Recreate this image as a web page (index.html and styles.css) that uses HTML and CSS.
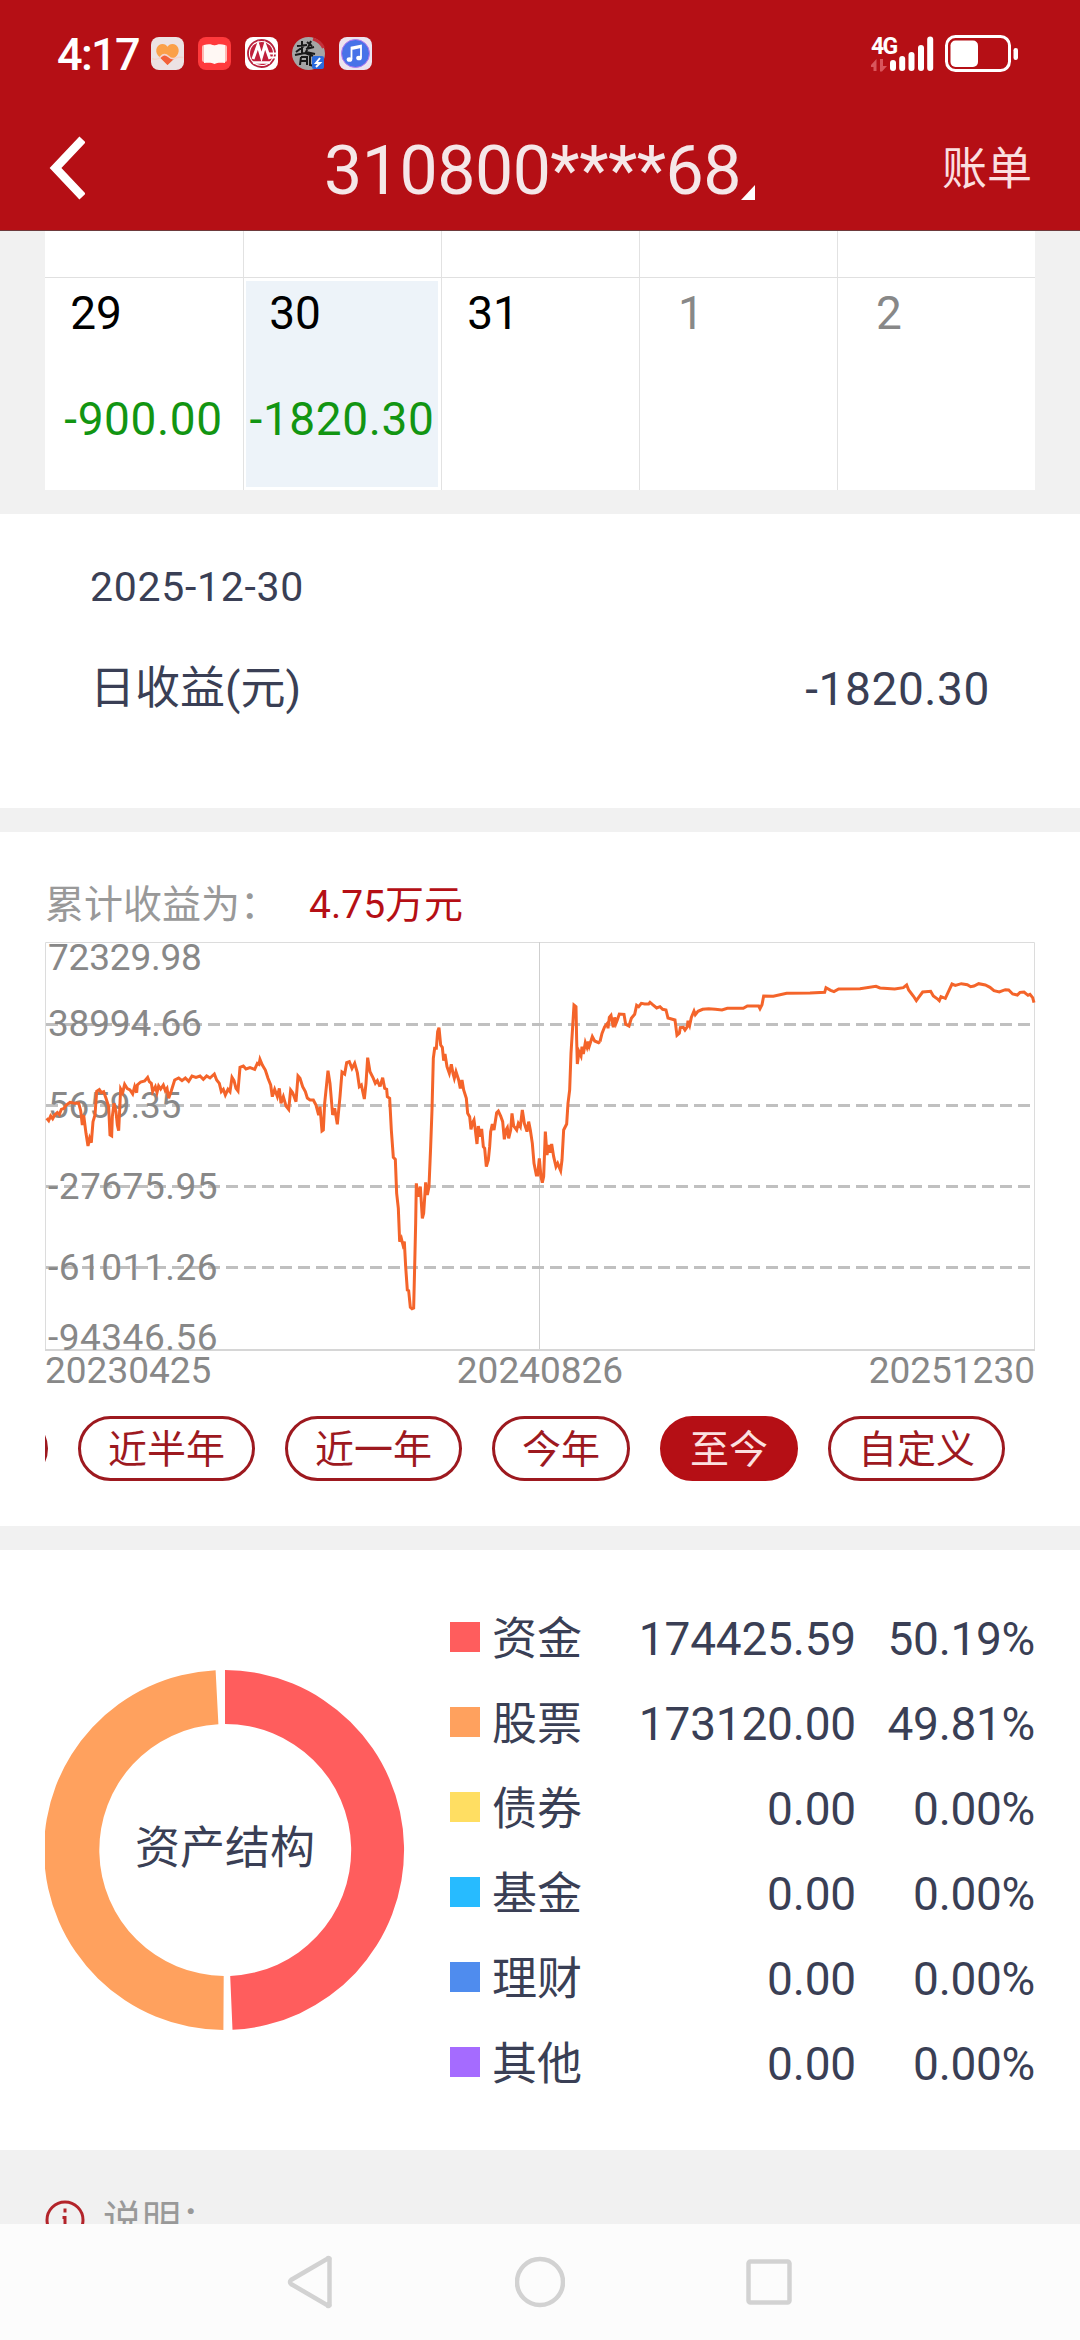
FILE: index.html
```html
<!DOCTYPE html>
<html lang="zh-CN">
<head>
  <meta charset="UTF-8">
  <title>收益日历</title>
  <link rel="stylesheet" href="styles.css">
</head>
<body>
  <header>
    <div class="status-bar">
      <span class="clock">4:17</span>
      <div class="notices">
        <svg viewBox="0 0 33 33">
          <rect width="33" height="33" rx="8" fill="#ece2e3"/>
          <path d="M16.500 28L7 18.500C3 13 6.500 7 11.500 7c2.500 0 4 1.200 5 2.800C17.500 8.200 19 7 21.500 7c5 0 8.500 6 4.500 11.500z" fill="#fba048"/>
          <path d="M9.500 21c3-4.500 6-4 8-1.500s4 3 7 1L16.500 28z" fill="#f2603a"/>
          <path d="M1 21.500c5 2 7 .5 9-2s5-2.500 7.500 0 5 2.500 7 1.500 4-1 8-.5" fill="none" stroke="#f3d3cd" stroke-width="1.600"/>
        </svg>
        <svg viewBox="0 0 33 33">
          <rect width="33" height="33" rx="8" fill="#ff3a3c"/>
          <rect x="4" y="8" width="25" height="17" rx="2" fill="#ffb9b4"/>
          <path d="M6 8c4-1 8-1 10.500 1C19 7 23 7 27 8v18c-4-.5-8-.5-10.500 1C14 25.500 10 25.500 6 26z" fill="#fff8f4"/>
        </svg>
        <svg viewBox="0 0 33 33">
          <rect width="33" height="33" rx="8" fill="#fff"/>
          <circle cx="16.500" cy="16.500" r="13.500" fill="none" stroke="#b8203c" stroke-width="1.800"/>
          <circle cx="16.500" cy="16.500" r="11.500" fill="#c0203c"/>
          <path d="M8 22L13 8l3.500 12L20 8l5 14" fill="none" stroke="#fff" stroke-width="3"/>
          <path d="M8 25.500h17" stroke="#fff" stroke-width="2.500"/>
          <path d="M24 16.500h9M25.500 20.500h7" stroke="#fff" stroke-width="2"/>
        </svg>
        <svg viewBox="0 0 33 33">
          <circle cx="16.500" cy="16.500" r="16.500" fill="#a5a5a5"/>
          <path d="M5 9l10-1M10 4v13M4 15l8-6M15 5l5 4M14 12l8-2M19 4l-5 11 9 2M3 18l10-2 8 3M9 20l-1 8M9 20h6v8M9 24h6M18 19v9l4 1" fill="none" stroke="#181818" stroke-width="2"/>
          <path d="M21 2c5 1.500 8.500 4.500 10.500 9" fill="none" stroke="#c3303a" stroke-width="3"/>
          <rect x="20" y="19" width="12" height="13" rx="2" fill="#2b6bdd"/>
          <path d="M28 21l-4 5h4l-4 4" fill="none" stroke="#fff" stroke-width="2"/>
        </svg>
        <svg viewBox="0 0 33 33">
          <rect width="33" height="33" rx="8" fill="#ece3ef"/>
          <circle cx="16.500" cy="16.500" r="14" fill="#4772e8"/>
          <circle cx="16.500" cy="16.500" r="14" fill="none" stroke="#b678ef" stroke-width="1"/>
          <path d="M12.500 22V10.500L22 8.500V20.500M12.500 12L22 10" fill="none" stroke="#fff" stroke-width="1.800"/>
          <ellipse cx="10.500" cy="22.500" rx="2.800" ry="2.300" fill="#fff"/>
          <ellipse cx="20" cy="21" rx="2.800" ry="2.300" fill="#fff"/>
        </svg>
      </div>
      <svg class="signal" viewBox="0 0 148 38">
        <text x="0" y="19">4G</text>
        <path d="M0 30h5.500v6h-3v-4H0zM0 30l5.500-6v7zM9 24h3v7h4l-5 5.500H9z" class="data"/>
        <g fill="#fff">
          <rect x="19" y="25" width="6" height="11" rx="3"/>
          <rect x="28.200" y="21" width="6" height="15" rx="3"/>
          <rect x="37.500" y="17" width="6" height="19" rx="3"/>
          <rect x="47" y="10" width="6" height="26" rx="3"/>
          <rect x="56.200" y="1.500" width="6" height="34.500" rx="3"/>
          <rect x="79.500" y="5.500" width="27.500" height="26.500" rx="5"/>
          <rect x="142.500" y="13" width="4.500" height="12" rx="2.200"/>
        </g>
        <rect x="75.500" y="1.500" width="63" height="34" rx="9" fill="none" stroke="#fff" stroke-width="3"/>
      </svg>
    </div>
    <div class="nav-bar">
      <svg class="back" viewBox="0 0 36 64"><path d="M33.500 3.500L6.500 32l27 28.500"/></svg>
      <h1>310800****68<i class="corner"></i></h1>
      <a class="bill">账单</a>
    </div>
  </header>

  <main>
    <div class="calendar">
      <div class="cell top"></div>
      <div class="cell top"></div>
      <div class="cell top"></div>
      <div class="cell top"></div>
      <div class="cell top"></div>
      <div class="cell"><div class="inner"><b>29</b><span class="neg">-900.00</span></div></div>
      <div class="cell"><div class="inner active"><b>30</b><span class="neg">-1820.30</span></div></div>
      <div class="cell"><div class="inner"><b>31</b></div></div>
      <div class="cell other"><div class="inner"><b>1</b></div></div>
      <div class="cell other"><div class="inner"><b>2</b></div></div>
    </div>

    <section class="detail">
      <div class="date">2025-12-30</div>
      <div class="row"><span>日收益(元)</span><span class="neg">-1820.30</span></div>
    </section>

    <section class="profit">
      <div class="total">累计收益为：<em>4.75万元</em></div>
      <svg class="chart" viewBox="0 0 990 409">
        <path class="frame" d="M.5 408V.5h989V408"/>
        <path class="middle" d="M494.500 0v408"/>
        <path class="axis" d="M0 408h990"/>
        <path class="grid" d="M1 82.500h985M1 163.500h985M1 244.500h985M1 325.500h985"/>
        <g class="labels">
          <text x="3" y="28">72329.98</text>
          <text x="3" y="94">38994.66</text>
          <text x="3" y="176">5659.35</text>
          <text x="3" y="257" class="neg">-27675.95</text>
          <text x="3" y="338" class="neg">-61011.26</text>
          <text x="3" y="408" class="neg">-94346.56</text>
        </g>
        <g class="line" transform="translate(-15 -72) scale(.33333)">
          <polyline points="50,745 56,752 62,738 68,746 74,735 82,728 88,734 94,718 102,715 108,706 120,697 134,700 146,699 152,722 157,765 161,735 168,790 174,828 179,805 184,818 189,755 195,735 200,664 208,659 214,668 221,665 228,685 236,710 240,795 245,798 247,740 252,700 258,725 262,765 266,782 269,720 272,657 278,668 284,643 292,656 300,660 308,672 314,650 320,668 322,645 332,636 344,633 353,622 358,635 364,640 368,665 376,650 381,668 386,648 392,657 400,645 406,662 411,655 416,685 424,662 434,630 446,624 456,632 466,624 476,634 486,618 498,622 510,618 520,628 530,618 540,624 553,612 560,630 568,640 574,665 580,658 586,675 594,658 600,665 606,622 612,632 618,655 624,663 630,592 640,588 648,597 660,593 674,598 682,580 687,583 690,568 697,585 706,600 714,625 722,645 727,680 734,658 742,680 748,655 753,700 760,680 768,708 776,718 782,660 788,668 798,695 804,618 810,625 818,650 826,665 832,684 840,690 850,690 858,705 866,735 870,710 876,783 880,780 884,700 894,602 900,640 908,735 914,715 922,763 930,680 936,606 944,612 950,578 958,575 966,595 974,580 982,608 988,650 994,645 1003,687 1008,640 1013,563 1020,605 1030,625 1036,640 1042,632 1050,650"/>
          <polyline transform="translate(930 180)" points="120,470 128,443 134,475 140,478 142,500 149,505 154,600 160,682 166,688 170,790 175,835 179,935 184,925 189,945 193,935 197,1010 202,1080 206,1082 211,1132 216,1136 221,1134 224,1010 227,880 229,760 234,800 241,770 247,865 251,850 257,757 262,795 267,770 272,650 276,540 280,385 284,355 289,355 293,305 297,293 302,345 307,352 311,392 315,372 321,410 328,430 334,403 339,430 343,445 348,425 356,450 361,475 366,450 371,480 379,505 383,550 389,560 393,598 397,580 402,570 406,600 411,642 415,588 420,620 425,597 430,650 434,655 439,710 445,690 449,650 452,605 457,582 462,600 470,548 475,543 482,558 488,575 493,628 498,600 502,593 506,625 512,600 516,550 521,588 530,600 535,580 541,590 547,540 553,580 561,605 566,575 571,600 577,640 582,700 589,735 593,735 598,685 603,740 607,758 611,740 616,605 621,675 626,645 630,668 635,642 641,680 648,710 653,700 662,722 666,690 671,600 680,582 684,520 689,480 693,370 698,290 702,225 708,230 710,330 712,402 717,365 723,378 726,350 730,372 736,338 741,352 745,335 748,348 757,320 764,333 776,338 780,335"/>
          <polyline transform="translate(1590 180)" points="120,335 126,310 134,290 142,280 144,295 148,262 153,256 160,292 164,262 168,280 172,270 178,252 192,253 197,283 207,288 214,265 224,253 230,226 236,230 244,220 254,222 266,222 270,217 278,224 290,234 300,230 308,238 318,240 324,264 345,270 351,316 358,310 361,293 370,292 375,300 382,290 384,272 389,286 394,262 402,243 406,254 414,244 428,238 446,236 466,238 486,240 502,235 530,235 550,235 562,228 596,228 600,236 606,224 611,198 640,199 680,190 750,189 794,187 798,173 812,181 822,185 836,177 900,176 948,169 960,174 1004,177 1030,173 1040,165 1046,180 1060,198 1069,212 1076,202 1088,186 1112,184 1120,198 1134,208 1138,212 1143,200 1156,205 1164,188 1176,162 1186,166 1204,161 1222,164 1232,170 1242,168 1256,161 1276,165 1290,172 1302,182 1318,186 1336,179 1346,180 1358,192 1372,195 1380,187 1392,186 1404,196 1410,193 1418,203 1422,218"/>
        </g>
      </svg>
      <div class="dates"><span>20230425</span><span>20240826</span><span>20251230</span></div>
      <div class="tabs">
        <button class="cut"></button>
        <button>近半年</button>
        <button>近一年</button>
        <button>今年</button>
        <button class="on">至今</button>
        <button>自定义</button>
      </div>
    </section>

    <section class="assets">
      <div class="donut">
        <svg viewBox="-180 -180 360 360">
          <path fill="#ff5d5d" d="M0-180A180 180 0 0 1 7.500 179.800L5.200 125.900A126 126 0 0 0 0-126z"/>
          <path fill="#ffa15e" d="M-1.600 180A180 180 0 0 1-9.400-179.800L-6.600-125.800A126 126 0 0 0-1.300 126z"/>
        </svg>
        <span>资产结构</span>
      </div>
      <ul class="legend">
        <li><i class="red"></i><span>资金</span><span class="num">174425.59</span><span class="pct">50.19%</span></li>
        <li><i class="orange"></i><span>股票</span><span class="num">173120.00</span><span class="pct">49.81%</span></li>
        <li><i class="yellow"></i><span>债券</span><span class="num">0.00</span><span class="pct">0.00%</span></li>
        <li><i class="cyan"></i><span>基金</span><span class="num">0.00</span><span class="pct">0.00%</span></li>
        <li><i class="blue"></i><span>理财</span><span class="num">0.00</span><span class="pct">0.00%</span></li>
        <li><i class="purple"></i><span>其他</span><span class="num">0.00</span><span class="pct">0.00%</span></li>
      </ul>
    </section>

    <div class="note">
      <svg viewBox="0 0 40 40"><circle cx="20" cy="20" r="18"/><path d="M20 8.500v4M17.500 17.500h2.500v13"/></svg>
      <span>说明：</span>
    </div>
  </main>

  <footer>
    <svg viewBox="0 0 50 54"><path d="M44.500 4.500v45a1 1 0 0 1-2 .8L6 29a2.500 2.500 0 0 1 0-4L42.500 3.700a1 1 0 0 1 2 .8z"/></svg>
    <svg viewBox="0 0 50 54"><circle cx="25" cy="27" r="23"/></svg>
    <svg viewBox="0 0 50 54"><rect x="4.500" y="6.500" width="41" height="41" rx="2"/></svg>
  </footer>
</body>
</html>
```

FILE: styles.css
```css
* { box-sizing: border-box; }
html, body { margin: 0; padding: 0; height: 100%; }
body { display: flex; flex-direction: column; height: 2340px; overflow: hidden; background: #f1f1f1; font-family: Roboto, "Noto Sans CJK SC", sans-serif; font-size: 46px; color: #3a3f55; }
svg { display: block; }

header { flex: none; height: 231px; background: #b50f15; border-bottom: 1px solid #6d3a3c; color: #fff; }
.status-bar { display: flex; align-items: center; height: 107px; padding: 0 61px 0 57px; }
.clock { width: 94px; padding-top: 2px; font-size: 45px; line-height: 60px; font-weight: 500; letter-spacing: -1.7px; }
.notices { display: flex; gap: 14px; flex: 1; }
.notices svg { width: 33px; height: 33px; }
.signal { width: 148px; height: 38px; overflow: visible; }
.signal text { font-size: 23px; font-weight: 700; fill: #fff; letter-spacing: -1.8px; }
.signal .data { fill: #d9565c; }
.nav-bar { display: flex; align-items: center; justify-content: space-between; height: 123px; padding: 0 49px; }
.back { width: 36px; height: 64px; flex: none; margin-top: -1px; }
.back path { fill: none; stroke: #fff; stroke-width: 8.5; }
h1 { display: flex; align-items: flex-end; margin: 4px 0 0 52px; font-size: 68px; line-height: 76px; font-weight: 400; letter-spacing: -.5px; color: #f5e7e8; }
.corner { width: 0; height: 0; margin: 0 0 9px; border-left: 14px solid transparent; border-bottom: 15px solid #fff; }
.bill { margin: 2px -1px 0 0; font-size: 45px; line-height: 60px; color: #fbdfe0; }

main { flex: 1; min-height: 0; overflow: hidden; }
section { background: #fff; margin-bottom: 24px; }
.neg { letter-spacing: .6px; }
.calendar { display: grid; grid-template-columns: 199px 198px 198px 198px 197px; margin: 0 45px 24px; background: #fff; }
.cell { height: 212px; padding: 3px 3px 3px 2px; border-right: 1px solid #e2e2e2; }
.cell:nth-child(5n) { border-right: none; }
.cell.top { height: 47px; border-bottom: 1px solid #e0e0e0; }
.inner { height: 206px; padding-top: 1px; display: flex; flex-direction: column; }
.inner.active { background: #edf3f9; }
.inner b { width: 98px; height: 62px; line-height: 62px; text-align: center; font-weight: 400; color: #000; }
.inner span { margin: 44px -10px 0; line-height: 62px; text-align: center; color: #129512; }
.other .inner b { color: #888; }

.detail { height: 294px; padding: 43px 90px 0; }
.date { font-size: 41px; line-height: 60px; letter-spacing: .7px; }
.row { display: flex; justify-content: space-between; margin-top: 42px; line-height: 60px; }
.row span:first-child { font-size: 45px; }

.profit { height: 694px; padding: 42px 45px 0; }
.total { height: 68px; line-height: 62px; font-size: 39px; color: #999; }
.total em { margin-left: 30px; font-style: normal; color: #b50f15; }
.chart { width: 990px; height: 409px; overflow: visible; }
.frame { fill: none; stroke: #dcdcdc; stroke-width: 1; }
.middle { fill: none; stroke: #cfcfcf; stroke-width: 1; }
.axis { fill: none; stroke: #d6d6d6; stroke-width: 2; }
.grid { fill: none; stroke: #c0c0c0; stroke-width: 3; stroke-dasharray: 12 6; }
.labels text { font-size: 37px; fill: #888; letter-spacing: -.2px; }
.labels .neg { letter-spacing: .5px; }
.line polyline { fill: none; stroke: #f4642a; stroke-width: 9; }
.dates { display: flex; justify-content: space-between; height: 65px; padding-top: 1px; line-height: 38px; font-size: 37px; color: #888; }
.tabs { display: flex; justify-content: flex-end; gap: 30px; padding-right: 30px; overflow: hidden; }
.tabs button { flex: none; height: 65px; padding: 3px 27px 0; border: 3px solid #9d191f; border-radius: 33px; background: #fff; font-family: inherit; font-size: 39px; line-height: 56px; color: #9d191f; }
.tabs .cut { width: 177px; }
.tabs .on { background: #b50f15; border-color: #b50f15; color: #fbe0e0; }

.assets { display: flex; height: 600px; padding: 0 45px; margin-bottom: 0; }
.donut { display: grid; place-items: center; width: 360px; height: 360px; margin-top: 120px; font-size: 45px; }
.donut svg, .donut span { grid-area: 1 / 1; }
.donut svg { width: 360px; height: 360px; }
.donut span { line-height: 60px; margin-top: -2px; }
.legend { flex: 1; list-style: none; margin: 45px 0 0 45px; padding: 0; }
.legend li { display: flex; align-items: center; height: 85px; line-height: 85px; }
.legend i { width: 30px; height: 30px; margin: -1px 12px 0 0; }
.legend span { padding-top: 3px; font-size: 45px; }
.legend .num { flex: 1; text-align: right; font-size: 46px; letter-spacing: -.2px; }
.legend .pct { width: 179px; text-align: right; font-size: 46px; letter-spacing: -.3px; }
.red { background: #ff5d5d; }
.orange { background: #ffa15e; }
.yellow { background: #ffde62; }
.cyan { background: #27bbff; }
.blue { background: #4f8cee; }
.purple { background: #a56bff; }

.note { display: flex; align-items: center; padding: 40px 45px; font-size: 39px; line-height: 60px; color: #999; }
.note svg { width: 40px; height: 40px; margin-right: 18px; fill: none; stroke: #b3242a; stroke-width: 3; }

footer { flex: none; display: flex; justify-content: space-between; height: 116px; padding: 31px 286px 0 285px; background: #fcfcfc; }
footer svg { width: 50px; height: 54px; fill: none; stroke: #d2d2d2; stroke-width: 4.5; }
```
